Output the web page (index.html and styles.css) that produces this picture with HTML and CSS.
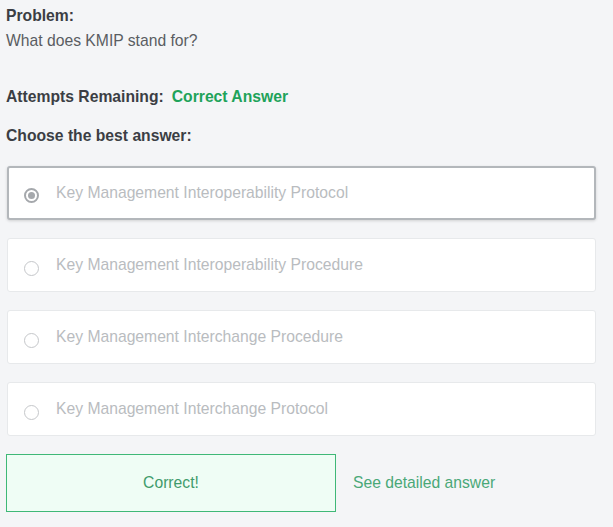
FILE: index.html
```html
<!DOCTYPE html>
<html>
<head>
<meta charset="utf-8">
<link rel="stylesheet" href="styles.css">
</head>
<body>
<div class="page">
  <div class="label">Problem:</div>
  <div class="question">What does KMIP stand for?</div>
  <div class="attempts"><span class="label">Attempts Remaining:</span><span class="status">Correct Answer</span></div>
  <div class="label choose">Choose the best answer:</div>
  <div class="options">
    <div class="option selected"><span class="radio"><span class="dot"></span></span><span class="text">Key Management Interoperability Protocol</span></div>
    <div class="option"><span class="radio"></span><span class="text">Key Management Interoperability Procedure</span></div>
    <div class="option"><span class="radio"></span><span class="text">Key Management Interchange Procedure</span></div>
    <div class="option"><span class="radio"></span><span class="text">Key Management Interchange Protocol</span></div>
  </div>
  <div class="footer">
    <div class="result">Correct!</div>
    <a class="detail">See detailed answer</a>
  </div>
</div>
</body>
</html>
```
FILE: styles.css
```css
html, body {
  margin: 0;
  padding: 0;
  background: #f4f5f7;
}
body {
  font-family: "Liberation Sans", Arial, sans-serif;
  font-size: 15.7px;
  line-height: 18px;
  color: #3b3e44;
}
.page {
  padding: 7px 17px 0 6px;
}
.label {
  font-weight: bold;
  color: #3b3e44;
}
.question {
  margin-top: 7px;
  color: #5a5d62;
}
.attempts {
  margin-top: 38px;
  display: flex;
  gap: 8px;
}
.status {
  color: #1ea35a;
  font-weight: bold;
}
.choose {
  margin-top: 21px;
}
.options {
  margin-top: 21px;
  display: flex;
  flex-direction: column;
  gap: 18px;
  padding-left: 1px;
}
.option {
  height: 54px;
  box-sizing: border-box;
  background: #fff;
  border: 1px solid #e7e9eb;
  border-radius: 3px;
  display: flex;
  align-items: center;
  padding-left: 16px;
  color: #b9bcc0;
}
.option.selected {
  border: 2px solid #b3b7bb;
  padding-left: 15px;
  box-shadow: 0 1px 3px rgba(0,0,0,0.15);
}
.radio {
  width: 15px;
  height: 15px;
  box-sizing: border-box;
  border: 1px solid #c5c7ca;
  border-radius: 50%;
  margin-right: 17px;
  margin-top: 6px;
  display: flex;
  align-items: center;
  justify-content: center;
}
.selected .radio {
  border: 2px solid #a5a8ac;
  margin-top: 5px;
}
.dot {
  width: 7px;
  height: 7px;
  border-radius: 50%;
  background: #a5a8ac;
}
.footer {
  margin-top: 18px;
  display: flex;
  align-items: center;
  gap: 17px;
}
.result {
  width: 330px;
  height: 58px;
  box-sizing: border-box;
  border: 1px solid #3fb877;
  background: #effdf5;
  color: #3f9b6b;
  display: flex;
  align-items: center;
  justify-content: center;
}
.detail {
  color: #4aa878;
}
```
